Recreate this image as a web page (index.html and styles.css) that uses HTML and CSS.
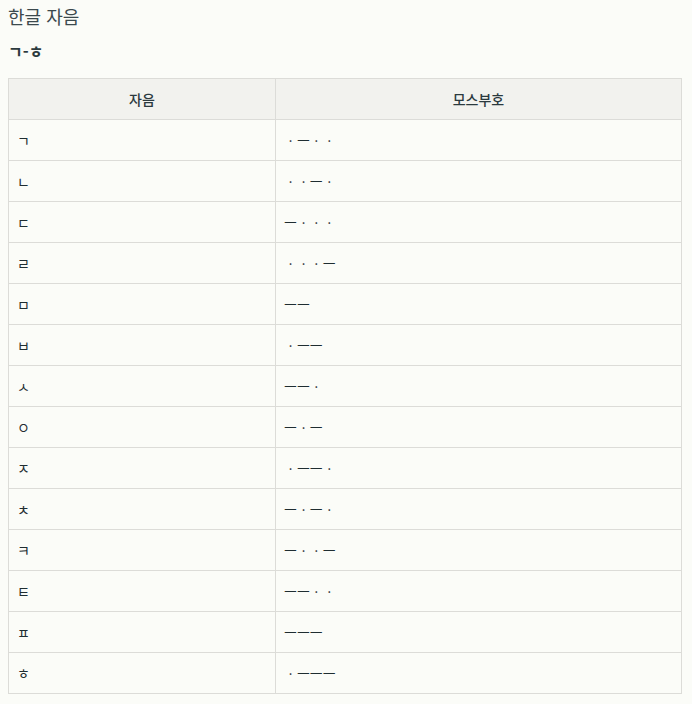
FILE: index.html
```html
<!DOCTYPE html>
<html lang="ko">
<head>
<meta charset="utf-8">
<link rel="stylesheet" href="styles.css">
</head>
<body>
<h1 class="title">한글 자음</h1>
<p class="sub">ㄱ-ㅎ</p>
<table class="morse">
<thead><tr><th class="c1">자음</th><th>모스부호</th></tr></thead>
<tbody>
<tr><td>ㄱ</td><td>ㆍㅡㆍㆍ</td></tr>
<tr><td>ㄴ</td><td>ㆍㆍㅡㆍ</td></tr>
<tr><td>ㄷ</td><td>ㅡㆍㆍㆍ</td></tr>
<tr><td>ㄹ</td><td>ㆍㆍㆍㅡ</td></tr>
<tr><td>ㅁ</td><td>ㅡㅡ</td></tr>
<tr><td>ㅂ</td><td>ㆍㅡㅡ</td></tr>
<tr><td>ㅅ</td><td>ㅡㅡㆍ</td></tr>
<tr><td>ㅇ</td><td>ㅡㆍㅡ</td></tr>
<tr><td>ㅈ</td><td>ㆍㅡㅡㆍ</td></tr>
<tr><td>ㅊ</td><td>ㅡㆍㅡㆍ</td></tr>
<tr><td>ㅋ</td><td>ㅡㆍㆍㅡ</td></tr>
<tr><td>ㅌ</td><td>ㅡㅡㆍㆍ</td></tr>
<tr><td>ㅍ</td><td>ㅡㅡㅡ</td></tr>
<tr><td>ㅎ</td><td>ㆍㅡㅡㅡ</td></tr>
</tbody>
</table>
</body>
</html>
```
FILE: styles.css
```css
html, body {
  margin: 0;
  padding: 0;
  background: #fbfcf8;
}
body {
  padding: 0 8px;
  font-family: "Noto Sans CJK KR", "Noto Sans", sans-serif;
  color: #2c3a3e;
}
.title {
  margin: 0;
  padding-top: 4px;
  font-size: 18px;
  font-weight: normal;
  line-height: 24px;
  color: #3b494d;
}
.sub {
  margin: 14px 0 0 0;
  font-size: 16px;
  font-weight: bold;
  line-height: 18px;
}
.morse {
  margin-top: 18px;
  width: 674px;
  border-collapse: collapse;
  font-size: 14px;
}
.morse th, .morse td {
  border: 1px solid #dcdcd8;
  height: 41px;
  padding: 0 8px;
  box-sizing: border-box;
}
.morse th {
  background: #f2f2ee;
  font-weight: 500;
  text-align: center;
}
.morse td {
  text-align: left;
  color: #1f2d31;
}
.c1 {
  width: 267px;
}
```
